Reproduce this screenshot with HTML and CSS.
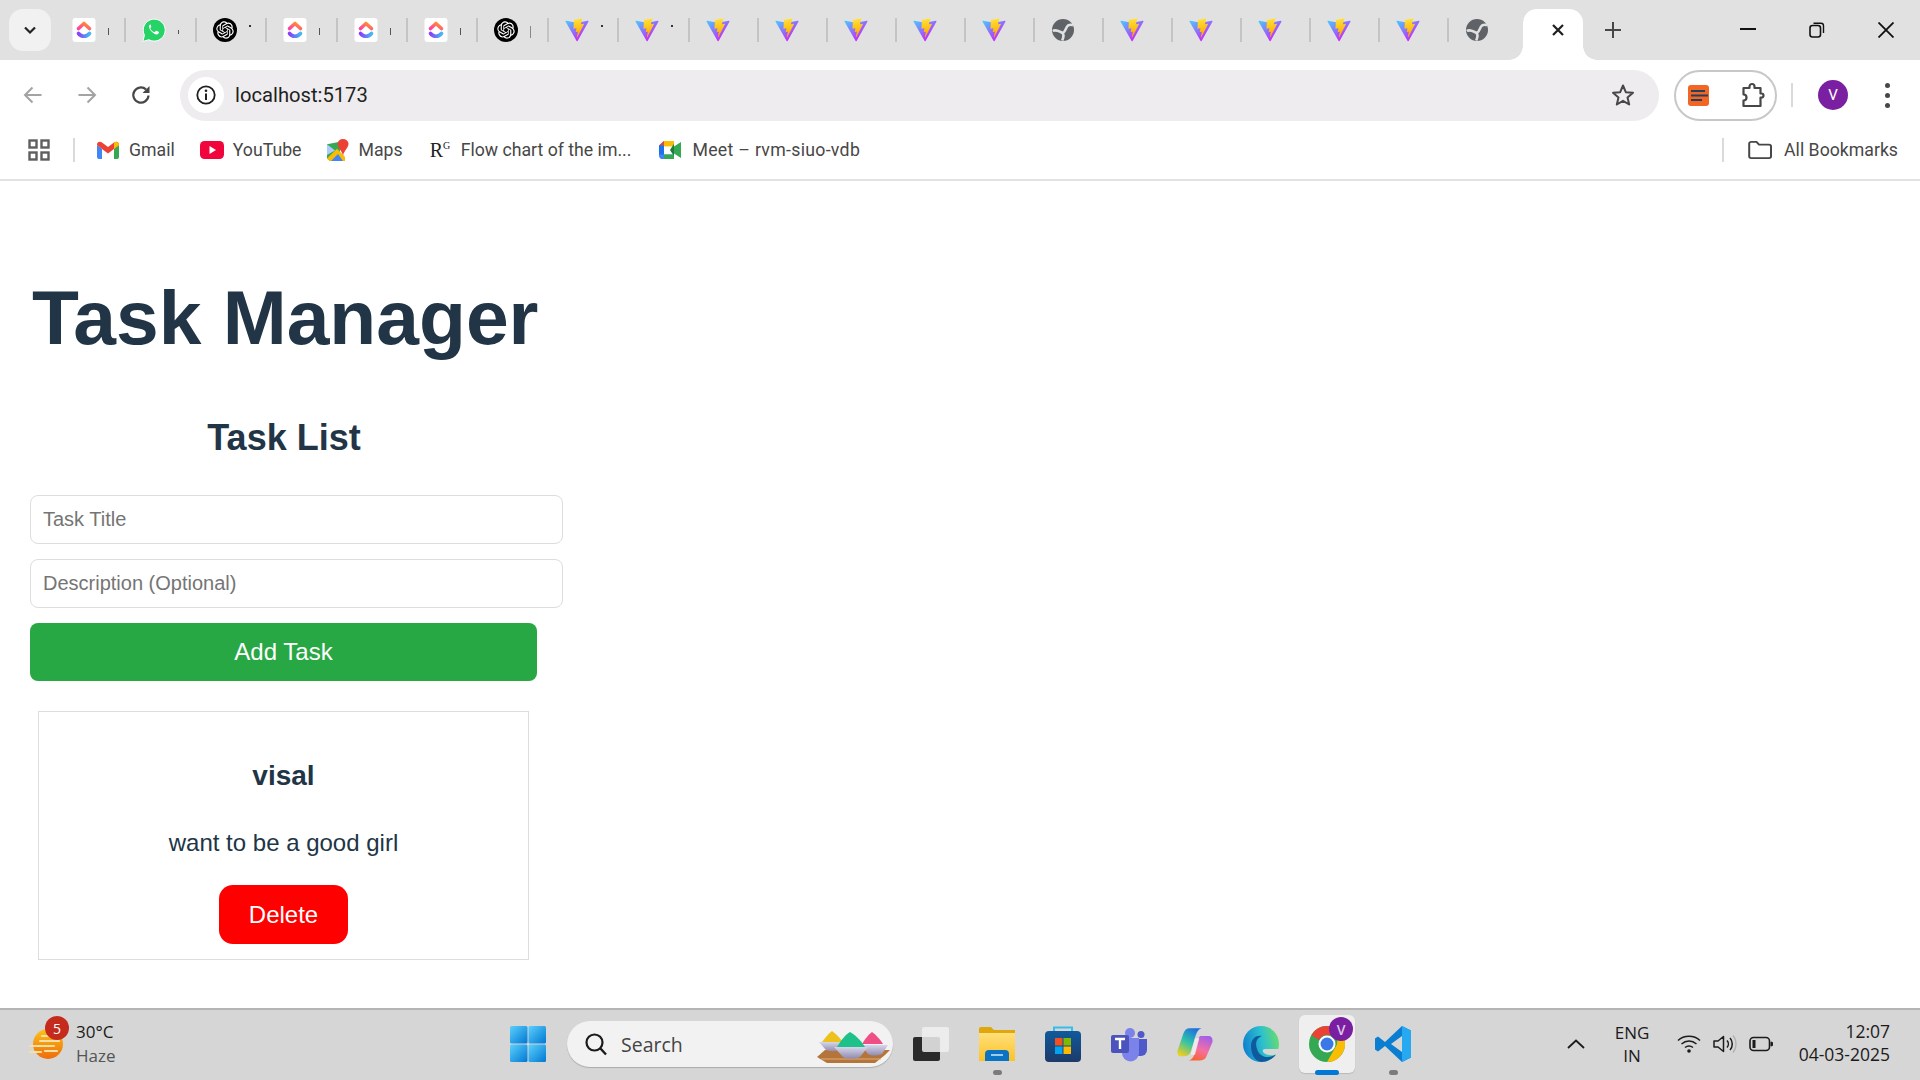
FILE: index.html
```html
<!DOCTYPE html>
<html lang="en">
<head>
<meta charset="utf-8">
<title>Task Manager</title>
<link rel="stylesheet" href="styles.css">
</head>
<body>
<svg class="defs" width="0" height="0" aria-hidden="true">
  <defs>
    <linearGradient id="vA" x1="6" y1="33" x2="235" y2="344" gradientUnits="userSpaceOnUse"><stop offset="0" stop-color="#41D1FF"/><stop offset="1" stop-color="#BD34FE"/></linearGradient>
    <linearGradient id="vB" x1="195" y1="9" x2="236" y2="293" gradientUnits="userSpaceOnUse"><stop offset="0" stop-color="#FFEA83"/><stop offset=".08" stop-color="#FFDD35"/><stop offset="1" stop-color="#FFA800"/></linearGradient>
    <linearGradient id="cuA" x1="0" y1="1" x2="1" y2="0"><stop offset="0" stop-color="#ff3fa8"/><stop offset="1" stop-color="#ff9a1f"/></linearGradient>
    <linearGradient id="cuB" x1="0" y1="0" x2="1" y2="0"><stop offset="0" stop-color="#8a3ffc"/><stop offset="1" stop-color="#45b8f5"/></linearGradient>
    <linearGradient id="win" x1="0" y1="0" x2="1" y2="1"><stop offset="0" stop-color="#5cd0fb"/><stop offset="1" stop-color="#0078d4"/></linearGradient>
    <linearGradient id="fold" x1="0" y1="0" x2="0" y2="1"><stop offset="0" stop-color="#ffdf7a"/><stop offset="1" stop-color="#fcc227"/></linearGradient>
    <linearGradient id="store" x1="0" y1="0" x2="0" y2="1"><stop offset="0" stop-color="#0f5a9c"/><stop offset="1" stop-color="#1d3a6a"/></linearGradient>
    <linearGradient id="edgeA" x1="0" y1=".6" x2="1" y2=".4"><stop offset="0" stop-color="#0f7fd0"/><stop offset=".55" stop-color="#2cc0cf"/><stop offset="1" stop-color="#66db70"/></linearGradient>
    <linearGradient id="copL" x1=".7" y1="0" x2=".2" y2="1"><stop offset="0" stop-color="#1f6fe0"/><stop offset=".5" stop-color="#2fc3a8"/><stop offset="1" stop-color="#f0cf1e"/></linearGradient>
    <linearGradient id="copR" x1=".7" y1="0" x2=".3" y2="1"><stop offset="0" stop-color="#a45fe8"/><stop offset=".55" stop-color="#f46fa0"/><stop offset="1" stop-color="#f8642e"/></linearGradient>
    <linearGradient id="wx" x1="0" y1="0" x2="0" y2="1"><stop offset="0" stop-color="#fbc31a"/><stop offset="1" stop-color="#ee6c0c"/></linearGradient>
    <linearGradient id="bowl" x1="0" y1="0" x2="0" y2="1"><stop offset="0" stop-color="#d8d6ea"/><stop offset="1" stop-color="#8f8cb0"/></linearGradient>
    <symbol id="clickup" viewBox="0 0 24 24">
      <rect x=".5" width="23" height="24" rx="3" fill="#fff"/>
      <path d="M6.500 10.500 12 5.500 17.500 10.500" fill="none" stroke="url(#cuA)" stroke-width="3.600" stroke-linecap="round" stroke-linejoin="round"/>
      <path d="M6.500 15.500c3 3.600 8 3.600 11 0" fill="none" stroke="url(#cuB)" stroke-width="3.600" stroke-linecap="round"/>
    </symbol>
    <symbol id="whatsapp" viewBox="0 0 24 24">
      <path d="M.8 23.500l1.700-6.200A11 11 0 1 1 6.800 21.700z" fill="#25d366" stroke="#fff" stroke-width="1"/>
      <path d="M8.600 6.300c-.5 0-1.300.6-1.500 1.700-.3 1.600.6 3.500 2.200 5.300 1.800 2 3.900 3.200 5.500 3.100 1.200-.1 2.100-1 2.200-1.900 0-.4-.1-.6-.4-.7l-2.200-1.100c-.3-.1-.5-.1-.7.2l-.8 1c-.2.2-.4.2-.7.1-1.700-.7-3-2-3.800-3.600-.1-.3 0-.5.100-.6l.6-.8c.2-.2.2-.4.1-.7l-.9-2.100c-.2-.3-.4-.4-.7-.4z" fill="#fff"/>
    </symbol>
    <symbol id="openai" viewBox="-4.500 -4.500 33 33">
      <circle cx="12" cy="12" r="16.500" fill="#000"/>
      <path fill="#fff" d="M22.2819 9.8211a5.9847 5.9847 0 0 0-.5157-4.9108 6.0462 6.0462 0 0 0-6.5098-2.9A6.0651 6.0651 0 0 0 4.9807 4.1818a5.9847 5.9847 0 0 0-3.9977 2.9 6.0462 6.0462 0 0 0 .7427 7.0966 5.98 5.98 0 0 0 .511 4.9107 6.051 6.051 0 0 0 6.5146 2.9001A5.9847 5.9847 0 0 0 13.2599 24a6.0557 6.0557 0 0 0 5.7718-4.2058 5.9894 5.9894 0 0 0 3.9977-2.9001 6.0557 6.0557 0 0 0-.7475-7.0729zm-9.022 12.6081a4.4755 4.4755 0 0 1-2.8764-1.0408l.1419-.0804 4.7783-2.7582a.7948.7948 0 0 0 .3927-.6813v-6.7369l2.02 1.1686a.071.071 0 0 1 .038.052v5.5826a4.504 4.504 0 0 1-4.4945 4.4944zm-9.6607-4.1254a4.4708 4.4708 0 0 1-.5346-3.0137l.142.0852 4.783 2.7582a.7712.7712 0 0 0 .7806 0l5.8428-3.3685v2.3324a.0804.0804 0 0 1-.0332.0615L9.74 19.9502a4.4992 4.4992 0 0 1-6.1408-1.6464zM2.3408 7.8956a4.485 4.485 0 0 1 2.3655-1.9728V11.6a.7664.7664 0 0 0 .3879.6765l5.8144 3.3543-2.0201 1.1685a.0757.0757 0 0 1-.071 0l-4.8303-2.7865A4.504 4.504 0 0 1 2.3408 7.872zm16.5963 3.8558L13.1038 8.364 15.1192 7.2a.0757.0757 0 0 1 .071 0l4.8303 2.7913a4.4944 4.4944 0 0 1-.6765 8.1042v-5.6772a.79.79 0 0 0-.407-.667zm2.0107-3.0231l-.142-.0852-4.7735-2.7818a.7759.7759 0 0 0-.7854 0L9.409 9.2297V6.8974a.0662.0662 0 0 1 .0284-.0615l4.8303-2.7866a4.4992 4.4992 0 0 1 6.6802 4.66zM8.3065 12.863l-2.02-1.1638a.0804.0804 0 0 1-.038-.0567V6.0742a4.4992 4.4992 0 0 1 7.3757-3.4537l-.142.0805L8.704 5.459a.7948.7948 0 0 0-.3927.6813zm1.0976-2.3654l2.602-1.4998 2.6069 1.4998v2.9994l-2.5974 1.4997-2.6067-1.4997Z"/>
    </symbol>
    <symbol id="vite" viewBox="0 0 410 404">
      <path d="M399.641 59.5246L215.643 388.545C211.844 395.338 202.084 395.378 198.228 388.618L10.5817 59.5563C6.38087 52.1896 12.6802 43.2665 21.0281 44.7586L205.223 77.6824C206.398 77.8924 207.601 77.8904 208.776 77.6763L389.119 44.8058C397.439 43.2894 403.768 52.1434 399.641 59.5246Z" fill="url(#vA)"/>
      <path d="M292.965 1.5744L156.801 28.2552C154.563 28.6937 152.906 30.5903 152.771 32.8664L144.395 174.33C144.198 177.662 147.258 180.248 150.51 179.498L188.42 170.749C191.967 169.931 195.172 173.055 194.443 176.622L183.18 231.775C182.422 235.487 185.907 238.661 189.532 237.56L212.947 230.446C216.577 229.344 220.065 232.527 219.297 236.242L201.398 322.875C200.278 328.294 207.486 331.249 210.492 326.603L212.5 323.5L323.454 102.072C325.312 98.3645 322.108 94.137 318.036 94.9228L279.014 102.454C275.347 103.161 272.227 99.746 273.262 96.1583L298.731 7.86689C299.767 4.27314 296.636 0.855181 292.965 1.5744Z" fill="url(#vB)"/>
    </symbol>
    <symbol id="globe" viewBox="-1 -1 24 24">
      <circle cx="11" cy="11" r="11" fill="#5f6368"/>
      <path d="M.8 12c3.500-2.200 6.800.8 9.700 2 1.500 1.500.8 5-.3 7.600M10.500 14c3.500-1 3-6 5.500-7.500 1.500-.8 3.500-.8 5-.3" fill="none" stroke="#e1e1e1" stroke-width="2.600"/>
    </symbol>
  </defs>
</svg>

<div class="window">
  <header class="tabstrip">
    <div class="tab-expand">
      <svg class="ico-16" viewBox="0 0 16 16"><path d="M3 5.500 8 10.500 13 5.500" fill="none" stroke="#222" stroke-width="2.200"/></svg>
    </div>
    <div class="tabs">
      <div class="tab"><svg class="fav"><use href="#clickup"/></svg><i class="stub"></i></div>
      <div class="tab"><svg class="fav"><use href="#whatsapp"/></svg><i class="stub stub-low"></i></div>
      <div class="tab"><svg class="fav"><use href="#openai"/></svg><i class="stub stub-top"></i></div>
      <div class="tab"><svg class="fav"><use href="#clickup"/></svg><i class="stub"></i></div>
      <div class="tab"><svg class="fav"><use href="#clickup"/></svg><i class="stub"></i></div>
      <div class="tab"><svg class="fav"><use href="#clickup"/></svg><i class="stub"></i></div>
      <div class="tab"><svg class="fav"><use href="#openai"/></svg><i class="stub stub-tall"></i></div>
      <div class="tab"><svg class="fav"><use href="#vite"/></svg><i class="stub stub-top"></i></div>
      <div class="tab"><svg class="fav"><use href="#vite"/></svg><i class="stub stub-top"></i></div>
      <div class="tab"><svg class="fav"><use href="#vite"/></svg></div>
      <div class="tab"><svg class="fav"><use href="#vite"/></svg></div>
      <div class="tab"><svg class="fav"><use href="#vite"/></svg></div>
      <div class="tab"><svg class="fav"><use href="#vite"/></svg></div>
      <div class="tab"><svg class="fav"><use href="#vite"/></svg></div>
      <div class="tab"><svg class="fav"><use href="#globe"/></svg></div>
      <div class="tab"><svg class="fav"><use href="#vite"/></svg></div>
      <div class="tab"><svg class="fav"><use href="#vite"/></svg></div>
      <div class="tab"><svg class="fav"><use href="#vite"/></svg></div>
      <div class="tab"><svg class="fav"><use href="#vite"/></svg></div>
      <div class="tab"><svg class="fav"><use href="#vite"/></svg></div>
      <div class="tab tab-last"><svg class="fav"><use href="#globe"/></svg></div>
    </div>
    <div class="tab-active">
      <svg class="ico-14" viewBox="0 0 14 14"><path d="M2 2 12 12M12 2 2 12" stroke="#1f1f1f" stroke-width="2.200"/></svg>
    </div>
    <div class="tab-new">
      <svg class="ico-18" viewBox="0 0 18 18"><path d="M9 1V17M1 9H17" stroke="#474747" stroke-width="2"/></svg>
    </div>
    <div class="win-controls">
      <div class="win-btn"><svg class="ico-16" viewBox="0 0 16 16"><path d="M0 7H16" stroke="#111" stroke-width="2"/></svg></div>
      <div class="win-btn"><svg class="ico-16" viewBox="0 0 16 16"><rect x="1" y="3.500" width="10.500" height="11.500" rx="2.500" fill="none" stroke="#111" stroke-width="1.600"/><path d="M4.500 1.200H12a2.500 2.500 0 0 1 2.500 2.500V11" fill="none" stroke="#111" stroke-width="1.400"/></svg></div>
      <div class="win-btn"><svg class="ico-16" viewBox="0 0 16 16"><path d="M.5.5 15.500 15.500M15.500.5 .5 15.500" stroke="#111" stroke-width="1.800"/></svg></div>
    </div>
  </header>

  <nav class="toolbar">
    <div class="nav-btn"><svg class="ico-20" viewBox="0 0 20 20"><path d="M18.500 10H2.500M9.500 2.500 2 10 9.500 17.500" fill="none" stroke="#a3a3a3" stroke-width="2"/></svg></div>
    <div class="nav-btn"><svg class="ico-20" viewBox="0 0 20 20"><path d="M1.500 10H17.500M10.500 2.500 18 10 10.500 17.500" fill="none" stroke="#a3a3a3" stroke-width="2"/></svg></div>
    <div class="nav-btn"><svg class="ico-20" viewBox="0 0 20 20"><path d="M17.500 10.500A7.600 7.600 0 1 1 15 4.400" fill="none" stroke="#474747" stroke-width="2.200"/><path d="M18.500 1V8H11.500z" fill="#474747"/></svg></div>
    <div class="omnibox">
      <div class="site-info"><svg class="ico-20" viewBox="0 0 20 20"><circle cx="10" cy="10" r="8.700" fill="none" stroke="#1f1f1f" stroke-width="1.800"/><path d="M10 8.500V15" stroke="#1f1f1f" stroke-width="2"/><circle cx="10" cy="5.700" r="1.300" fill="#1f1f1f"/></svg></div>
      <span class="url">localhost:5173</span>
      <svg class="star" viewBox="0 0 24 24"><path d="M12 2.500 14.800 9.200 22 9.800 16.500 14.500 18.200 21.500 12 17.800 5.800 21.500 7.500 14.500 2 9.800 9.200 9.200z" fill="none" stroke="#474747" stroke-width="2" stroke-linejoin="round"/></svg>
    </div>
    <div class="ext-pill">
      <svg class="ext-note" viewBox="0 0 21 21"><rect width="21" height="21" rx="3" fill="#f26522"/><path d="M3 6H17M3 10.500H20M3 15H14" stroke="#24405e" stroke-width="1.800"/></svg>
      <svg class="ext-puzzle" viewBox="0 0 24 26"><path d="M2.500 6H8.500V4.500a2.500 2.500 0 0 1 5 0V6H19.500V11.500h1a2 2 0 0 1 0 4h-1V24H2.500V18.500a3 3 0 0 0 0-6z" fill="none" stroke="#474747" stroke-width="2.200" stroke-linejoin="round"/></svg>
    </div>
    <i class="tool-sep"></i>
    <div class="avatar">V</div>
    <div class="kebab"><i></i><i></i><i></i></div>
  </nav>

  <nav class="bookmarks">
    <svg class="apps" viewBox="0 0 22 22"><g fill="none" stroke="#5f5f5f" stroke-width="2.400"><rect x="1.500" y="1.500" width="7" height="7"/><rect x="13.500" y="1.500" width="7" height="7"/><rect x="1.500" y="13.500" width="7" height="7"/><rect x="13.500" y="13.500" width="7" height="7"/></g></svg>
    <i class="bm-sep"></i>
    <a class="bm bm-gmail"><svg class="bm-ico" viewBox="0 0 22 18"><path d="M0 4V16a2 2 0 0 0 2 2H5V8z" fill="#4285f4"/><path d="M22 4V16a2 2 0 0 1-2 2H17V8z" fill="#34a853"/><path d="M0 4C0 1 2.500 0 5 1.500L11 6 17 1.500C19.500 0 22 1 22 4L17 8 11 12.500 5 8z" fill="#ea4335"/><path d="M17 1.500C19.500 0 22 1 22 4L17 8z" fill="#fbbc04"/></svg><span>Gmail</span></a>
    <a class="bm bm-yt"><svg class="bm-ico" viewBox="0 0 24 18"><rect width="24" height="18" rx="4.500" fill="#f0063c"/><path d="M9.500 5 16 9 9.500 13z" fill="#fff"/></svg><span>YouTube</span></a>
    <a class="bm bm-maps"><svg class="bm-ico-maps" viewBox="0 0 22 26" preserveAspectRatio="none"><path d="M0 6 13 3V24L3 25 0 22z" fill="#34a853"/><path d="M0 22 10 11 18 20V25H3z" fill="#fbbc04"/><path d="M4 25 11 17 16 25z" fill="#4285f4"/><path d="M0 6 8 13 0 18z" fill="#aecbfa"/><path d="M16 0a5.500 5.500 0 0 1 5.500 5.500C21.500 10 17 13 16 19 15 13 10.500 10 10.500 5.500A5.500 5.500 0 0 1 16 0z" fill="#ea4335"/></svg><span>Maps</span></a>
    <a class="bm bm-rg"><span class="rg-logo">R<sup>G</sup></span><span>Flow chart of the im...</span></a>
    <a class="bm bm-meet"><svg class="bm-ico" viewBox="0 0 22 20" preserveAspectRatio="none"><path d="M5 0H15V5H5V15H15V20H4a4 4 0 0 1-4-4V5z" fill="#4285f4"/><path d="M5 0V5H0z" fill="#ea4335"/><path d="M5 0H15V6L11 6H5z" fill="#fbbc04"/><path d="M0 5H5V15H0z" fill="#1a73e8"/><path d="M5 15H15V20H5z" fill="#34a853"/><path d="M15 3V17L11 10z" fill="#188038"/><path d="M15 6 22 1V19L15 14z" fill="#34a853"/></svg><span>Meet – rvm-siuo-vdb</span></a>
    <i class="bm-sep bm-sep-right"></i>
    <a class="bm bm-all"><svg class="bm-ico-folder" viewBox="0 0 24 20" preserveAspectRatio="none"><path d="M1.200 3a2 2 0 0 1 2-2H8.500L11 4H21a2 2 0 0 1 2 2V17a2 2 0 0 1-2 2H3.200a2 2 0 0 1-2-2z" fill="none" stroke="#474747" stroke-width="2"/></svg><span>All Bookmarks</span></a>
  </nav>

  <main class="page">
    <div class="app">
      <h1>Task Manager</h1>
      <h2>Task List</h2>
      <form class="task-form">
        <input class="field" type="text" placeholder="Task Title">
        <input class="field" type="text" placeholder="Description (Optional)">
        <button class="add" type="button">Add Task</button>
      </form>
      <ul class="task-list">
        <li class="card">
          <h3>visal</h3>
          <p>want to be a good girl</p>
          <button class="del" type="button">Delete</button>
        </li>
      </ul>
    </div>
  </main>

  <footer class="taskbar">
    <div class="weather">
      <div class="wx-icon">
        <svg class="wx-svg" viewBox="0 0 34 30"><circle cx="19" cy="15" r="15" fill="url(#wx)"/><path d="M13 7H24M11 12H30M1 17H25M16 22H28M1 23H12" stroke="#f7dfa3" stroke-width="2.200" stroke-linecap="round"/></svg>
        <span class="wx-badge">5</span>
      </div>
      <div class="wx-text"><span class="wx-temp">30°C</span><span class="wx-desc">Haze</span></div>
    </div>
    <div class="tile">
      <svg class="tb-ico" viewBox="0 0 36 36"><rect width="17.500" height="17.500" rx="1.500" fill="url(#win)"/><rect x="18.500" width="17.500" height="17.500" rx="1.500" fill="url(#win)"/><rect y="18.500" width="17.500" height="17.500" rx="1.500" fill="url(#win)"/><rect x="18.500" y="18.500" width="17.500" height="17.500" rx="1.500" fill="url(#win)"/></svg>
    </div>
    <div class="search">
      <svg class="search-ico" viewBox="0 0 24 24"><circle cx="10.500" cy="10.500" r="8" fill="none" stroke="#1b1b1b" stroke-width="2.200"/><path d="M16 16 22 22.500" stroke="#1b1b1b" stroke-width="2.400"/></svg>
      <span class="search-text">Search</span>
      <svg class="holi" viewBox="0 0 74 46">
        <path d="M-2 36 6 29H71L66 34 56 42H8z" fill="#b5743a"/>
        <path d="M2 38H62" stroke="#dcae7c" stroke-width="1.200"/>
        <path d="M3 21C6 17 10 12 13 10 16 12 21 17 24 21z" fill="#eec21c"/>
        <path d="M0 21H24L21 28C17 31 9 31 6 28z" fill="url(#bowl)"/>
        <path d="M43 23C46 18 50 13 53 11 56 13 61 18 64 23z" fill="#ef4f84"/>
        <path d="M42 24H69L63 33C58 35 53 35 49 33z" fill="url(#bowl)"/>
        <path d="M18 26C22 19 27 13 31 11 35 13 42 19 46 26z" fill="#1fc18a"/>
        <path d="M15 26H49L41 36C36 38 28 38 24 36z" fill="url(#bowl)"/>
      </svg>
    </div>
    <div class="tb-apps">
      <div class="tile">
        <svg class="tb-ico" viewBox="0 0 36 34"><rect y="10" width="27" height="24" rx="2" fill="#2b2b2b"/><rect x="9" width="27" height="25" rx="2" fill="#f0f0f0" fill-opacity=".85"/></svg>
      </div>
      <div class="tile">
        <svg class="tb-ico" viewBox="0 0 36 34"><path d="M0 2a2 2 0 0 1 2-2H12L15 3H36V34H0z" fill="#e0a70d"/><path d="M0 6H36V34H0z" fill="url(#fold)"/><path d="M6 34V27a4 4 0 0 1 4-4H26a4 4 0 0 1 4 4V34z" fill="#0a73c4"/><path d="M12 28H24" stroke="#cfe7f8" stroke-width="1.500"/></svg>
        <i class="dot"></i>
      </div>
      <div class="tile">
        <svg class="tb-ico" viewBox="0 0 36 36"><path d="M9 7V1.500H27V7" fill="none" stroke="#36bdeb" stroke-width="2"/><rect y="5" width="36" height="31" rx="4" fill="url(#store)"/><rect x="10" y="12" width="7.500" height="7.500" fill="#f25022"/><rect x="18.500" y="12" width="7.500" height="7.500" fill="#7fba00"/><rect x="10" y="20.500" width="7.500" height="7.500" fill="#00a4ef"/><rect x="18.500" y="20.500" width="7.500" height="7.500" fill="#ffb900"/></svg>
      </div>
      <div class="tile">
        <svg class="tb-ico" viewBox="0 0 36 34"><circle cx="30" cy="7.500" r="3.500" fill="#5059c9"/><path d="M23 12H36V23a6 6 0 0 1-6 6H23z" fill="#5059c9"/><circle cx="19" cy="6" r="5" fill="#7b83eb"/><path d="M10 11H28V26a8.500 8.500 0 0 1-17 0z" fill="#7b83eb"/><rect y="8" width="18" height="18" rx="2" fill="#4b53bc"/><path d="M4 12H14M9 12V22" stroke="#fff" stroke-width="2.400"/></svg>
      </div>
      <div class="tile">
        <svg class="tb-ico" viewBox="0 0 100 92">
          <path d="M65 24H88C96 24 101 32 98 42L82 80C79 88 72 92 62 92H30C38 92 44 86 47 78L58 38C60 30 62 24 65 24z" fill="url(#copR)"/>
          <path d="M35 2H68C60 4 55 12 52 22L38 68C35 76 28 80 18 80H10C3 80-1 72 2 63L18 16C21 7 27 2 35 2z" fill="url(#copL)"/>
          <path d="M50 30H62L50 76H38z" fill="#eeeeee" fill-opacity=".85"/>
        </svg>
      </div>
      <div class="tile">
        <svg class="tb-ico" viewBox="0 0 36 36">
          <circle cx="18" cy="18" r="18" fill="url(#edgeA)"/>
          <path d="M36.500 23H22C20 23 19 25 20.500 26.500 23 29 28 30 33 28.500L27 37H37z" fill="#d6d6d6"/>
          <path d="M8 20C8 12 14 9 19 10 13 12 12 18 14 23 16 30 24 34 33 28.500 29 34 23 36 18 36 11 35 8 27 8 20z" fill="#0e5a9c"/>
        </svg>
      </div>
      <div class="tile tile-active">
        <svg class="tb-ico" viewBox="0 0 36 36"><circle cx="18" cy="18" r="18" fill="#34a853"/><path d="M18 0A18 18 0 0 1 33.600 9H18a9 9 0 0 0-8 5L2.500 9A18 18 0 0 1 18 0z" fill="#ea4335"/><path d="M33.600 9A18 18 0 0 1 18 36L26 22a9 9 0 0 0-1-13z" fill="#fbbc04"/><circle cx="18" cy="18" r="8.500" fill="#fff"/><circle cx="18" cy="18" r="6.500" fill="#3b78e7"/></svg>
        <span class="chrome-badge">V</span>
        <i class="dot dot-active"></i>
      </div>
      <div class="tile">
        <svg class="tb-ico" viewBox="0 0 36 36"><path d="M36 4.500 27 0 10 16 3 10.500 0 12.500V23.500L3 25.500 10 20 27 36 36 31.500z" fill="#0a7ed0"/><path d="M27 0 36 4.500V31.500L27 36z" fill="#27a9f2"/><path d="M27 10V26L16 18z" fill="#d6d6d6"/></svg>
        <i class="dot"></i>
      </div>
    </div>
    <div class="tray">
      <svg class="tray-chev" viewBox="0 0 18 10"><path d="M1 9 9 1.500 17 9" fill="none" stroke="#1b1b1b" stroke-width="1.800"/></svg>
      <div class="lang"><span>ENG</span><span>IN</span></div>
      <div class="tray-ico"><svg class="ico-24" viewBox="0 0 24 20"><g fill="none" stroke="#1b1b1b" stroke-width="1.500"><path d="M1 6.500C7 .8 17 .8 23 6.500"/><path d="M4.500 10C9 6 15 6 19.500 10"/><path d="M8 13.500c2.500-2 5.500-2 8 0"/></g><circle cx="12" cy="17" r="1.800" fill="#1b1b1b"/></svg></div>
      <div class="tray-ico"><svg class="ico-24" viewBox="0 0 24 20"><path d="M1 7H5L10.500 2.500V17.500L5 13H1z" fill="none" stroke="#1b1b1b" stroke-width="1.500" stroke-linejoin="round"/><path d="M14 6.500c1.800 2 1.800 5 0 7M17 4c3 3.200 3 8.800 0 12" fill="none" stroke="#1b1b1b" stroke-width="1.500"/><path d="M20 1.500c4 4.500 4 12.500 0 17" fill="none" stroke="#b0b0b0" stroke-width="1.200"/></svg></div>
      <div class="tray-ico"><svg class="ico-24" viewBox="0 0 24 16"><rect x="1" y="1.500" width="19.500" height="13" rx="3.500" fill="none" stroke="#1b1b1b" stroke-width="1.600"/><rect x="3.500" y="4" width="3" height="8" fill="#1b1b1b"/><path d="M22 6a2 2 0 0 1 0 4z" fill="#1b1b1b" stroke="#1b1b1b"/></svg></div>
      <div class="clock"><span>12:07</span><span>04-03-2025</span></div>
    </div>
  </footer>
</div>
</body>
</html>
```
FILE: styles.css
```css
* { box-sizing: border-box; }
html, body { margin: 0; height: 100%; overflow: hidden; }
body { font-family: Roboto, "Noto Sans", sans-serif; background: #fff; }
.defs { position: absolute; }
i { display: block; font-style: normal; }
svg { display: block; flex: none; }
.ico-14 { width: 14px; height: 14px; }
.ico-16 { width: 16px; height: 16px; }
.ico-18 { width: 18px; height: 18px; }
.ico-20 { width: 20px; height: 20px; }
.ico-24 { width: 24px; height: 20px; }

.window { display: flex; flex-direction: column; height: 1080px; }

/* tab strip */
.tabstrip { display: flex; height: 60px; background: #e1e1e1; flex: none; }
.tab-expand { width: 42px; height: 42px; margin: 9px 0 0 9px; border-radius: 14px; background: #f1f1f1; display: flex; align-items: center; justify-content: center; }
.tabs { display: flex; margin-left: 5px; width: 1467px; }
.tab { position: relative; width: 69px; flex: none; display: flex; align-items: center; padding-left: 16px; height: 60px; }
.tab:nth-child(-n+9) { width: 70.400px; }
.tab::after { content: ""; position: absolute; right: 0; top: 18px; width: 2px; height: 24px; background: #c4c4c4; }
.tab-last::after { display: none; }
.fav { width: 24px; height: 24px; }
.stub { position: absolute; left: 52px; top: 28px; width: 1px; height: 7px; background: #555; }
.stub-top { top: 25px; width: 2px; height: 2px; background: #333; }
.stub-low { top: 30px; height: 4px; }
.stub-tall { height: 12px; top: 26px; background: #888; }
.tab-active { position: relative; width: 60px; height: 51px; margin: 9px 0 0 0; background: #fff; border-radius: 14px 14px 0 0; display: flex; align-items: center; justify-content: center; padding: 0 0 9px 10px; }
.tab-active::before, .tab-active::after { content: ""; position: absolute; bottom: 0; width: 14px; height: 14px; }
.tab-active::before { left: -14px; background: radial-gradient(circle at 0 0, #e1e1e1 13.500px, #fff 14px); }
.tab-active::after { right: -14px; background: radial-gradient(circle at 100% 0, #e1e1e1 13.500px, #fff 14px); }
.tab-new { width: 60px; display: flex; align-items: center; justify-content: center; height: 60px; }
.win-controls { display: flex; margin-left: auto; }
.win-btn { width: 69px; height: 60px; display: flex; align-items: center; justify-content: center; }

/* toolbar */
.toolbar { display: flex; align-items: center; height: 61px; padding: 9px 18px 0 6px; background: #fff; border-radius: 14px 14px 0 0; flex: none; }
.nav-btn { width: 54px; height: 51px; display: flex; align-items: center; justify-content: center; }
.omnibox { flex: 1; height: 51px; margin-left: 12px; border-radius: 26px; background: #eeecee; display: flex; align-items: center; padding: 0 24px 0 8px; }
.site-info { width: 36px; height: 36px; border-radius: 50%; background: #fff; display: flex; align-items: center; justify-content: center; }
.url { margin-left: 11px; font-size: 20.200px; color: #1f1f1f; }
.star { width: 24px; height: 24px; margin-left: auto; }
.ext-pill { width: 103px; height: 51px; margin-left: 15px; border: 2px solid #c8c8c8; border-radius: 26px; display: flex; align-items: center; padding-left: 12px; }
.ext-note { width: 21px; height: 21px; }
.ext-puzzle { width: 24px; height: 26px; margin-left: 32px; }
.tool-sep { width: 2px; height: 24px; background: #dadada; margin-left: 14px; }
.avatar { width: 30px; height: 30px; margin-left: 25px; border-radius: 50%; background: #7b1fa2; color: #fff; font-size: 15px; display: flex; align-items: center; justify-content: center; }
.kebab { width: 30px; margin-left: 24px; display: flex; flex-direction: column; align-items: center; gap: 5px; }
.kebab i { width: 5px; height: 5px; border-radius: 50%; background: #474747; }

/* bookmarks */
.bookmarks { display: flex; align-items: center; height: 60px; padding: 0 0 0 28px; border-bottom: 2px solid #e2e2e2; flex: none; font-size: 17.700px; color: #474747; }
.apps { width: 22px; height: 22px; }
.bm-sep { width: 2px; height: 24px; background: #dadada; margin-left: 23px; }
.bm { display: flex; align-items: center; gap: 10px; white-space: nowrap; }
.bm-ico { width: 22px; height: 18px; }
.bm-gmail { margin-left: 22px; }
.bm-yt { margin-left: 25px; gap: 9px; }
.bm-yt .bm-ico { width: 24px; }
.bm-maps { margin-left: 25px; }
.bm-ico-maps { width: 22px; height: 23px; }
.bm-rg { margin-left: 27px; }
.rg-logo { font-family: "Liberation Serif", serif; font-size: 20px; color: #222; width: 20px; line-height: 1; margin-right: 1px; }
.rg-logo sup { font-size: 10px; line-height: 0; vertical-align: 8px; }
.bm-meet { margin-left: 28px; gap: 11px; }
.bm-meet span { letter-spacing: .3px; }
.bm-sep-right { margin-left: auto; margin-right: 24px; }
.bm-ico-folder { width: 24px; height: 18px; }
.bm-all { padding-right: 22px; gap: 12px; }

/* page */
.page { flex: 1; min-height: 0; padding: 43px 0 0 30px; font-family: "Liberation Sans", Arial, sans-serif; color: #213547; }
.app { width: 507px; text-align: center; }
h1 { margin: 51px 0; padding-left: 2px; font-size: 76.800px; line-height: 84.500px; font-weight: 700; white-space: nowrap; }
h2 { margin: 0 0 30px; padding-left: 1px; font-size: 36px; line-height: 54px; font-weight: 700; }
.task-form { margin: 0 0 30px; }
.field { display: block; width: 533px; height: 49px; margin: 0 0 15px; padding: 0 12px; border: 1.500px solid #ddd; border-radius: 8px; background: #fff; font: 20px "Liberation Sans", Arial, sans-serif; color: #213547; }
.field::placeholder { color: #757575; opacity: 1; }
.add { display: block; width: 100%; height: 58px; border: 0; border-radius: 8px; background: #28a745; color: #fff; font: 24px "Liberation Sans", Arial, sans-serif; }
.task-list { list-style: none; margin: 0 8px; padding: 0; }
.card { height: 249px; padding: 15px; border: 1.500px solid #ddd; display: flex; flex-direction: column; align-items: center; }
h3 { margin: 28px 0; font-size: 28px; line-height: 42px; font-weight: 700; }
.card p { margin: 0 0 24px; font-size: 24px; line-height: 36px; }
.del { width: 129px; height: 59px; padding: 2px 0 0; border: 0; border-radius: 14px; background: #f00; color: #fff; font: 24px "Liberation Sans", Arial, sans-serif; flex: none; }

/* taskbar */
.taskbar { display: flex; align-items: center; height: 72px; padding: 0 30px 2px 0; background: #d6d6d6; border-top: 2px solid #b4b4b4; flex: none; font-family: "Open Sans", "Noto Sans", sans-serif; color: #1b1b1b; }
.weather { display: flex; align-items: center; width: 495px; padding-left: 29px; flex: none; }
.wx-icon { position: relative; width: 34px; height: 30px; }
.wx-svg { width: 34px; height: 30px; }
.wx-badge { position: absolute; left: 16px; top: -13px; width: 24px; height: 24px; border-radius: 50%; background: #c42b1c; color: #fff; font-size: 14px; display: flex; align-items: center; justify-content: center; }
.wx-text { display: flex; flex-direction: column; margin-left: 13px; font-size: 17px; line-height: 24px; }
.wx-desc { color: #555; }
.tile { position: relative; width: 66px; height: 70px; flex: none; display: flex; align-items: center; justify-content: center; }
.tb-ico { width: 36px; height: 36px; }
.tile-active::before { content: ""; position: absolute; left: 5px; right: 5px; top: 6px; bottom: 6px; border-radius: 6px; background: #efefef; box-shadow: 0 1px 1px #bbb; }
.tile-active .tb-ico { position: relative; }
.chrome-badge { position: absolute; left: 35px; top: 8px; width: 24px; height: 24px; border-radius: 50%; background: #7b1fa2; color: #ddc6e6; font-size: 14px; font-weight: 600; display: flex; align-items: center; justify-content: center; }
.dot { position: absolute; left: 29px; bottom: 4px; width: 9px; height: 5px; border-radius: 3px; background: #7c7c7c; }
.dot-active { left: 21px; width: 24px; background: #0078d4; }
.search { width: 326px; height: 46px; margin-left: 6px; border-radius: 23px; background: #f2f2f2; box-shadow: 0 1px 1px #aaa; display: flex; align-items: center; padding-left: 17px; position: relative; flex: none; }
.search-ico { width: 24px; height: 24px; }
.search-text { margin-left: 13px; font-size: 19.500px; color: #444; }
.holi { position: absolute; right: 0; top: 0; width: 74px; height: 46px; overflow: visible; }
.tb-apps { display: flex; margin-left: 5px; flex: none; }
.tray { display: flex; align-items: center; margin-left: auto; }
.tray-chev { width: 18px; height: 10px; margin-right: 17px; }
.lang { display: flex; flex-direction: column; align-items: center; width: 60px; font-size: 17px; line-height: 23px; margin-right: 9px; }
.tray-ico { width: 36px; display: flex; justify-content: center; }
.clock { display: flex; flex-direction: column; align-items: flex-end; width: 111px; font-size: 17.500px; line-height: 23px; padding-bottom: 2px; }
```
